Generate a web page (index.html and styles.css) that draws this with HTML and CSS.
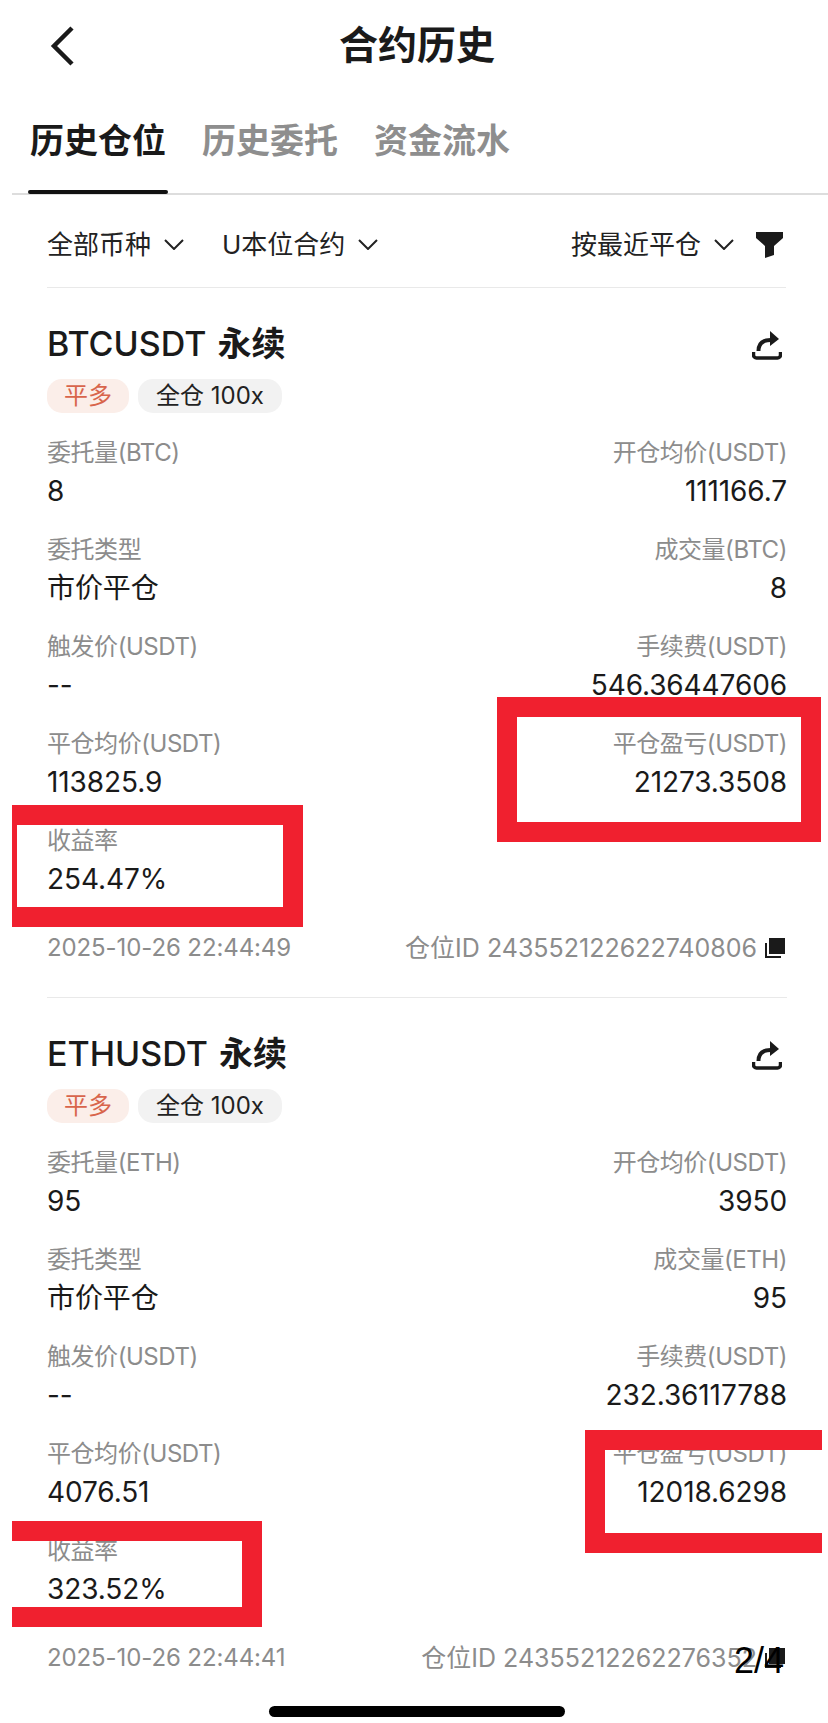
FILE: index.html
```html
<!DOCTYPE html>
<html lang="zh-CN">
<head>
    <meta charset="UTF-8">
    <meta name="viewport" content="width=device-width, initial-scale=1.0">
    <title>合约历史</title>
    <link rel="stylesheet" href="styles.css">
</head>
<body>
    <div class="page">
        <!-- Header -->
        <header class="nav">
            <svg class="back" width="26" height="40" viewBox="0 0 26 40"><polyline points="23,2 5,20 23,38" fill="none" stroke="#1a1a1a" stroke-width="4.5"/></svg>
            <h1>合约历史</h1>
        </header>

        <!-- Tabs -->
        <nav class="tabs">
            <a class="tab active">历史仓位</a>
            <a class="tab">历史委托</a>
            <a class="tab">资金流水</a>
        </nav>

        <!-- Filters -->
        <div class="filters">
            <span class="filter">全部币种<svg class="caret" width="20" height="11" viewBox="0 0 20 11"><polyline points="1,1 10,10 19,1" fill="none" stroke="#222" stroke-width="2"/></svg></span>
            <span class="filter">U本位合约<svg class="caret" width="20" height="11" viewBox="0 0 20 11"><polyline points="1,1 10,10 19,1" fill="none" stroke="#222" stroke-width="2"/></svg></span>
            <span class="filter sort">按最近平仓<svg class="caret" width="20" height="11" viewBox="0 0 20 11"><polyline points="1,1 10,10 19,1" fill="none" stroke="#222" stroke-width="2"/></svg></span>
            <svg class="funnel" width="27" height="26" viewBox="0 0 27 26"><path d="M0 0H27V6L18 14V23L9 26V14L0 6Z" fill="#1a1a1a"/></svg>
        </div>

        <!-- Position 1 -->
        <section class="position">
            <div class="pos-head">
                <h2>BTCUSDT <b>永续</b></h2>
                <svg class="share" width="30" height="29" viewBox="0 0 30 29"><path d="M1.5 21v3a3 3 0 0 0 3 3h21a3 3 0 0 0 3-3v-3" fill="none" stroke="#1a1a1a" stroke-width="3.5"/><path d="M6.5 20c0-7 4-11 12-11" fill="none" stroke="#1a1a1a" stroke-width="4"/><path d="M18 0l9 8-9 7z" fill="#1a1a1a"/></svg>
            </div>
            <div class="tags">
                <span class="tag close">平多</span>
                <span class="tag">全仓 100x</span>
            </div>
            <div class="rows">
                <div class="row">
                    <div><p class="label">委托量(BTC)</p><p class="value">8</p></div>
                    <div class="right"><p class="label">开仓均价(USDT)</p><p class="value">111166.7</p></div>
                </div>
                <div class="row">
                    <div><p class="label">委托类型</p><p class="value">市价平仓</p></div>
                    <div class="right"><p class="label">成交量(BTC)</p><p class="value">8</p></div>
                </div>
                <div class="row">
                    <div><p class="label">触发价(USDT)</p><p class="value">--</p></div>
                    <div class="right"><p class="label">手续费(USDT)</p><p class="value">546.36447606</p></div>
                </div>
                <div class="row">
                    <div><p class="label">平仓均价(USDT)</p><p class="value">113825.9</p></div>
                    <div class="right"><p class="label">平仓盈亏(USDT)</p><p class="value">21273.3508</p></div>
                </div>
                <div class="row">
                    <div><p class="label">收益率</p><p class="value">254.47%</p></div>
                </div>
            </div>
            <div class="pos-foot">
                <span class="pos-time">2025-10-26 22:44:49</span>
                <span class="pos-id">仓位ID 243552122622740806<svg class="copy" width="20" height="20" viewBox="0 0 20 20"><rect x="4" y="0" width="16" height="16" fill="#1a1a1a"/><path d="M1 5v14h15" fill="none" stroke="#1a1a1a" stroke-width="2"/></svg></span>
            </div>
        </section>

        <!-- Position 2 -->
        <section class="position">
            <div class="pos-head">
                <h2>ETHUSDT <b>永续</b></h2>
                <svg class="share" width="30" height="29" viewBox="0 0 30 29"><path d="M1.5 21v3a3 3 0 0 0 3 3h21a3 3 0 0 0 3-3v-3" fill="none" stroke="#1a1a1a" stroke-width="3.5"/><path d="M6.5 20c0-7 4-11 12-11" fill="none" stroke="#1a1a1a" stroke-width="4"/><path d="M18 0l9 8-9 7z" fill="#1a1a1a"/></svg>
            </div>
            <div class="tags">
                <span class="tag close">平多</span>
                <span class="tag">全仓 100x</span>
            </div>
            <div class="rows">
                <div class="row">
                    <div><p class="label">委托量(ETH)</p><p class="value">95</p></div>
                    <div class="right"><p class="label">开仓均价(USDT)</p><p class="value">3950</p></div>
                </div>
                <div class="row">
                    <div><p class="label">委托类型</p><p class="value">市价平仓</p></div>
                    <div class="right"><p class="label">成交量(ETH)</p><p class="value">95</p></div>
                </div>
                <div class="row">
                    <div><p class="label">触发价(USDT)</p><p class="value">--</p></div>
                    <div class="right"><p class="label">手续费(USDT)</p><p class="value">232.36117788</p></div>
                </div>
                <div class="row">
                    <div><p class="label">平仓均价(USDT)</p><p class="value">4076.51</p></div>
                    <div class="right"><p class="label">平仓盈亏(USDT)</p><p class="value">12018.6298</p></div>
                </div>
                <div class="row">
                    <div><p class="label">收益率</p><p class="value">323.52%</p></div>
                </div>
            </div>
            <div class="pos-foot">
                <span class="pos-time">2025-10-26 22:44:41</span>
                <span class="pos-id">仓位ID 24355212262276352<svg class="copy" width="20" height="20" viewBox="0 0 20 20"><rect x="4" y="0" width="16" height="16" fill="#1a1a1a"/><path d="M1 5v14h15" fill="none" stroke="#1a1a1a" stroke-width="2"/></svg></span>
            </div>
        </section>

        <div class="home-bar"></div>

        <!-- Annotations drawn over the screenshot -->
        <div class="mark mark-pnl-1"></div>
        <div class="mark mark-rate-1"></div>
        <div class="mark mark-pnl-2"></div>
        <div class="mark mark-rate-2"></div>
        <div class="page-count">2/4</div>
    </div>
</body>
</html>
```

FILE: styles.css
```css
/* General Styles */
* {
    box-sizing: border-box;
}

body {
    margin: 0;
    padding: 0;
    background-color: #fff;
    color: #1a1a1a;
    font-family: 'Inter', 'Noto Sans CJK SC', sans-serif;
}

.page {
    position: relative;
    width: 828px;
    height: 1723px;
    overflow: hidden;
    background-color: #fff;
}

p {
    margin: 0;
}

/* Header */
.nav {
    position: relative;
    display: flex;
    align-items: center;
    justify-content: center;
    height: 84px;
}

.nav h1 {
    margin: 0 0 0 6px;
    font-size: 39px;
    font-weight: 700;
    line-height: 46px;
    font-family: 'Noto Sans CJK SC', sans-serif;
}

.back {
    position: absolute;
    left: 49px;
    top: 26px;
}

/* Tabs */
.tabs {
    display: flex;
    gap: 36px;
    height: 111px;
    margin-left: 12px;
    padding-left: 18px;
    border-bottom: 2px solid #ddd;
}

.tab {
    position: relative;
    padding-top: 31px;
    font-size: 34px;
    font-weight: 700;
    line-height: 48px;
    color: #8e8e8e;
    font-family: 'Noto Sans CJK SC', sans-serif;
}

.tab.active {
    color: #1a1a1a;
}

.tab.active::after {
    content: "";
    position: absolute;
    left: -2px;
    right: -2px;
    bottom: -1px;
    height: 4px;
    border-radius: 2px;
    background-color: #111;
}

/* Filters */
.filters {
    display: flex;
    align-items: center;
    gap: 20px;
    height: 93px;
    margin: 0 42px 0 47px;
    padding-top: 7px;
    border-bottom: 1px solid #e9e9e9;
}

.filter {
    display: flex;
    align-items: center;
    gap: 13px;
    font-size: 26px;
    line-height: 36px;
    color: #222;
    margin-right: 18px;
}

.filter.sort {
    margin-left: auto;
    margin-right: 2px;
}

.funnel {
    margin-right: 3px;
}

/* Position card */
.position {
    margin: 0 41px 0 47px;
    padding-top: 35px;
    height: 709px;
}

.position + .position {
    border-top: 1px solid #e9e9e9;
}

.pos-head {
    display: flex;
    align-items: center;
    justify-content: space-between;
    height: 40px;
}

.pos-head h2 {
    margin: 0;
    font-size: 34px;
    font-weight: 500;
    line-height: 40px;
}

.pos-head h2 b {
    margin-left: 2px;
    font-family: 'Noto Sans CJK SC', sans-serif;
    font-weight: 700;
}

.share {
    margin: 4px 5px 0 0;
}

.tags {
    display: flex;
    gap: 9px;
    margin-top: 16px;
}

.tag {
    height: 34px;
    padding: 0 18px;
    border-radius: 15px;
    background-color: #f2f2f2;
    font-size: 24px;
    line-height: 33px;
    color: #222;
}

.tag.close {
    padding: 0 17px;
    background-color: #fbeee9;
    color: #d8654c;
}

.rows {
    display: flex;
    flex-direction: column;
    gap: 20px;
    margin-top: 21px;
}

.row {
    display: flex;
    justify-content: space-between;
    height: 77px;
}

.right {
    text-align: right;
}

.label {
    font-size: 24px;
    line-height: 38px;
    letter-spacing: -0.45px;
    color: #8c8c8c;
}

.value {
    font-size: 28px;
    line-height: 39px;
    letter-spacing: -0.1px;
    color: #1a1a1a;
}

.pos-foot {
    display: flex;
    justify-content: space-between;
    margin-top: 31px;
    line-height: 36px;
    color: #8c8c8c;
}

.pos-time {
    font-size: 24px;
    letter-spacing: -0.1px;
}

.pos-id {
    display: flex;
    align-items: center;
    gap: 8px;
    font-size: 25px;
}

.copy {
    margin-right: 2px;
}

/* Home indicator */
.home-bar {
    width: 296px;
    height: 11px;
    margin: 0 0 0 269px;
    border-radius: 6px;
    background-color: #000;
}

/* Red annotation boxes */
.mark {
    position: absolute;
    border: 20px solid #f0202f;
}

.mark-pnl-1 {
    left: 497px;
    top: 697px;
    width: 324px;
    height: 145px;
}

.mark-rate-1 {
    left: 12px;
    top: 805px;
    width: 291px;
    height: 122px;
    border-left-width: 5px;
}

.mark-pnl-2 {
    left: 585px;
    top: 1430px;
    width: 237px;
    height: 123px;
    border-right-width: 0;
}

.mark-rate-2 {
    left: 12px;
    top: 1521px;
    width: 250px;
    height: 106px;
    border-left-width: 0;
}

.page-count {
    position: absolute;
    left: 734px;
    top: 1640px;
    font-family: 'Liberation Sans', sans-serif;
    font-size: 36px;
    line-height: 42px;
    color: #000;
}
```
